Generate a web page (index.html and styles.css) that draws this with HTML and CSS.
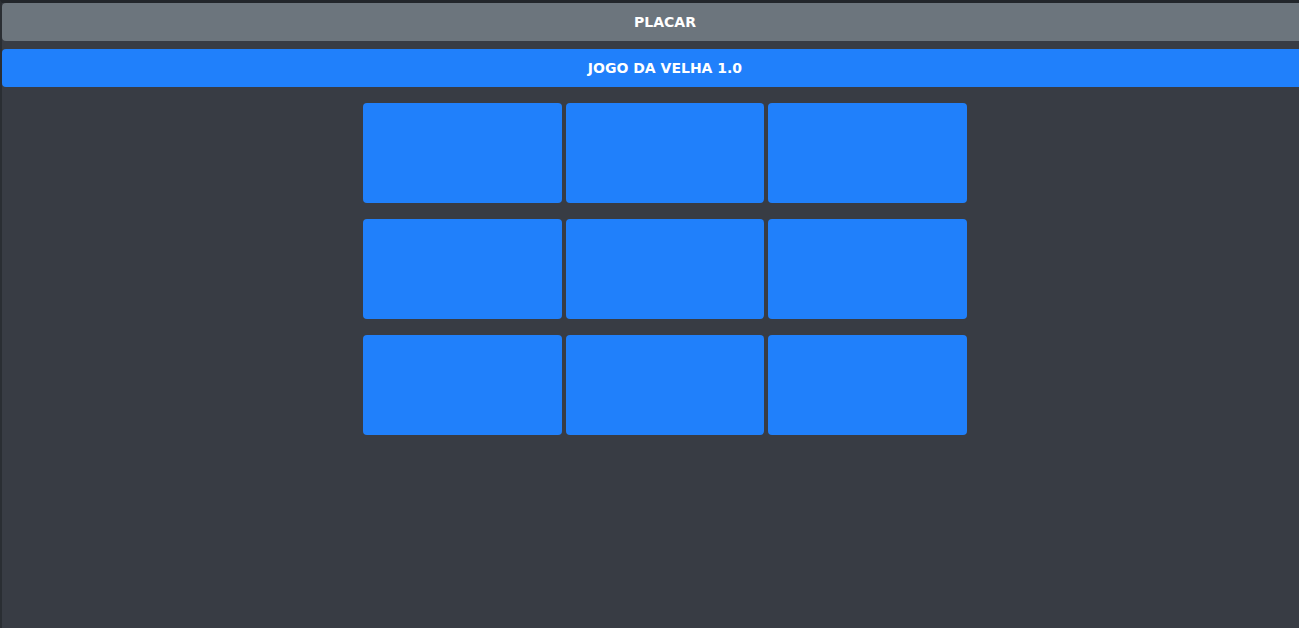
FILE: index.html
```html
<!DOCTYPE html>
<html lang="pt">
<head>
<meta charset="utf-8">
<title>Jogo da Velha</title>
<link rel="stylesheet" href="styles.css">
</head>
<body>
<div class="app">
  <button class="bar bar-score">PLACAR</button>
  <button class="bar bar-title">JOGO DA VELHA 1.0</button>
  <div class="board">
    <button class="cell"></button>
    <button class="cell"></button>
    <button class="cell"></button>
    <button class="cell"></button>
    <button class="cell"></button>
    <button class="cell"></button>
    <button class="cell"></button>
    <button class="cell"></button>
    <button class="cell"></button>
  </div>
</div>
</body>
</html>
```
FILE: styles.css
```css
html, body {
  margin: 0;
  padding: 0;
  height: 100%;
}
body {
  background: #383c44;
  border-top: 3px solid #22262b;
  border-left: 2px solid #2a2e33;
  box-sizing: border-box;
  overflow: hidden;
  font-family: "DejaVu Sans", "Noto Sans", sans-serif;
}
.app {
  width: 1326px;
  display: flex;
  flex-direction: column;
  gap: 8px;
}
.bar {
  display: block;
  width: 100%;
  height: 38px;
  border: none;
  border-radius: 4px;
  color: #ffffff;
  font-family: inherit;
  font-weight: bold;
  font-size: 14px;
  padding: 0;
  margin: 0;
}
.bar-score {
  background: #6c757d;
}
.bar-title {
  background: #2080fb;
}
.board {
  align-self: center;
  margin-top: 8px;
  display: grid;
  grid-template-columns: 199px 198px 199px;
  grid-auto-rows: 100px;
  column-gap: 4px;
  row-gap: 16px;
}
.cell {
  background: #2080fb;
  border: none;
  border-radius: 4px;
  padding: 0;
  margin: 0;
}
```
